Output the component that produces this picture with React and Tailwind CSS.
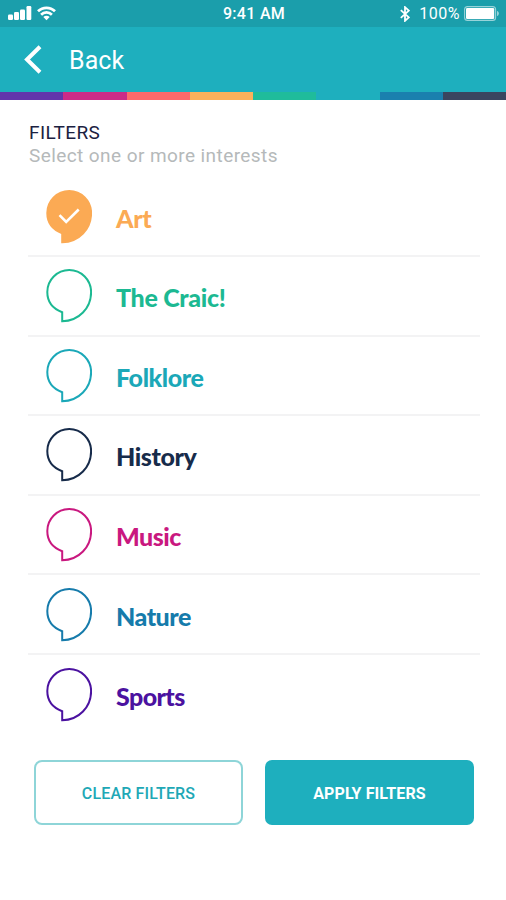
import React, { useState } from "react";

const stripes = [
  "bg-[#6236ab]",
  "bg-[#cb2b87]",
  "bg-[#fd6a6b]",
  "bg-[#fcb15b]",
  "bg-[#1fbc9b]",
  "bg-[#1eafbe]",
  "bg-[#1a80ae]",
  "bg-[#3a465f]",
];

const interests = [
  { name: "Art", color: "text-[#fbaa54]", tracking: "tracking-[-0.3px]" },
  { name: "The Craic!", color: "text-[#1cb992]", tracking: "tracking-[-0.3px]" },
  { name: "Folklore", color: "text-[#1ba8b8]", tracking: "tracking-[-0.4px]" },
  { name: "History", color: "text-[#172b4a]", tracking: "tracking-[-0.4px]" },
  { name: "Music", color: "text-[#c9187f]", tracking: "tracking-[-0.5px]" },
  { name: "Nature", color: "text-[#167bab]", tracking: "tracking-[-0.5px]" },
  { name: "Sports", color: "text-[#4b12a0]", tracking: "tracking-[-0.6px]" },
];

function StatusBar() {
  return (
    <div className="grid h-[27px] grid-cols-3 items-center bg-[#1b9eab] pl-2 pr-[6px] text-[16px] leading-none text-white">
      <div className="flex items-center gap-[5px]">
        <svg width="24" height="15" viewBox="0 0 24 15" fill="currentColor">
          <rect x="0" y="8.500" width="5" height="5.500" rx="1.2" />
          <rect x="6" y="6" width="5" height="8" rx="1.2" />
          <rect x="12" y="3.5" width="5" height="10.5" rx="1.2" />
          <rect x="18.5" y="0" width="4.8" height="14" rx="1.2" />
        </svg>
        <svg width="19" height="15" viewBox="0 0 19 15" fill="none" stroke="currentColor" strokeWidth="2.7">
          <path d="M1 5.3C5.7.6 13.3.6 18 5.3" />
          <path d="M4.1 8.7c3-3 7.8-3 10.8 0" />
          <path d="M9.5 14.2 6.3 11c1.8-1.7 4.6-1.7 6.4 0z" fill="currentColor" stroke="none" />
        </svg>
      </div>
      <div className="pt-px text-center font-medium tracking-[0.3px]">9:41 AM</div>
      <div className="flex items-center justify-end">
        <svg className="mr-[9px]" width="10" height="16" viewBox="0 0 10 16" fill="none" stroke="currentColor" strokeWidth="1.8">
          <path d="m.8 4.2 8 7.2L5 14.8V1.2l3.8 3.4-8 7.2" />
        </svg>
        <span className="mr-[4px] pt-px tracking-[0.5px]">100%</span>
        <svg width="36" height="15" viewBox="0 0 36 15">
          <rect x=".6" y=".6" width="31" height="13.8" rx="3" fill="none" stroke="white" strokeOpacity=".55" strokeWidth="1.1" />
          <rect x="2" y="2" width="28.2" height="11" rx="1.3" fill="white" />
          <path d="M33 5v5c2.500-.6 2.500-4.400 0-5z" fill="white" fillOpacity=".55" />
        </svg>
      </div>
    </div>
  );
}

function Bubble({ checked }) {
  return (
    <svg
      className="shrink-0"
      width="46"
      height="54"
      viewBox="0 0 46 54"
      fill={checked ? "currentColor" : "none"}
      stroke="currentColor"
      strokeWidth="2"
    >
      <path d="M16.200 43.200C7 39.800 1.300 32.500 1.300 23A21.900 22 0 0 1 45.100 23C45.100 39 33 52 16.200 52.300Z" />
      {checked && <path d="m13.500 25.200 6.700 6.800 12.500-12.500" fill="none" stroke="white" strokeWidth="2.600" />}
    </svg>
  );
}

function App() {
  const [selected, setSelected] = useState(["Art"]);

  const toggle = (name) => {
    if (selected.includes(name)) {
      setSelected(selected.filter((s) => s !== name));
    } else {
      setSelected([...selected, name]);
    }
  };

  return (
    <div className="h-[900px] w-full overflow-hidden bg-white font-['Roboto',sans-serif]">
      <StatusBar />
      <header className="flex h-[65px] items-center bg-[#1eafbe] pl-6 text-white">
        <svg width="18" height="29" viewBox="0 0 18 29" fill="none" stroke="currentColor" strokeWidth="4">
          <path d="M16 1.700 3 14.500 16 27.300" />
        </svg>
        <button className="ml-[27px] pt-[2px] text-[25px] tracking-[0.1px]">Back</button>
      </header>
      <div className="grid h-2 grid-cols-8">
        {stripes.map((color) => (
          <div key={color} className={color} />
        ))}
      </div>

      <main className="px-[28px] pt-[21px]">
        <h1 className="pl-px text-[19px] leading-[23px] tracking-[0.4px] text-[#1b2141]">FILTERS</h1>
        <p className="pl-px text-[19px] leading-[23px] tracking-[0.42px] text-[#b5b9ba]">
          Select one or more interests
        </p>

        <ul className="mt-[10.400px] -mr-[2px]">
          {interests.map((item) => (
            <li key={item.name} className="h-[79.600px] border-b-2 border-[#f3f3f4] last:border-0">
              <button
                onClick={() => toggle(item.name)}
                className={`flex h-full w-full items-center gap-6 pl-[18px] pt-px text-left ${item.color}`}
              >
                <Bubble checked={selected.includes(item.name)} />
                <span className={`pt-[3px] font-['Lato',sans-serif] text-[25px] font-black leading-none ${item.tracking}`}>
                  {item.name}
                </span>
              </button>
            </li>
          ))}
        </ul>

        <div className="mt-[25.600px] flex gap-[22px] pl-[6px]">
          <button
            onClick={() => setSelected([])}
            className="h-[65px] w-[209px] shrink-0 rounded-[8px] border-[2.500px] border-[#8ed5d8] pt-[2px] text-[16px] font-medium tracking-[0.15px] text-[#1ea8b6]"
          >
            CLEAR FILTERS
          </button>
          <button className="h-[65px] w-[209px] shrink-0 rounded-[7px] bg-[#1eafbe] pt-[2px] text-[16px] font-bold tracking-[0.1px] text-white">
            APPLY FILTERS
          </button>
        </div>
      </main>
    </div>
  );
}

export default App;
